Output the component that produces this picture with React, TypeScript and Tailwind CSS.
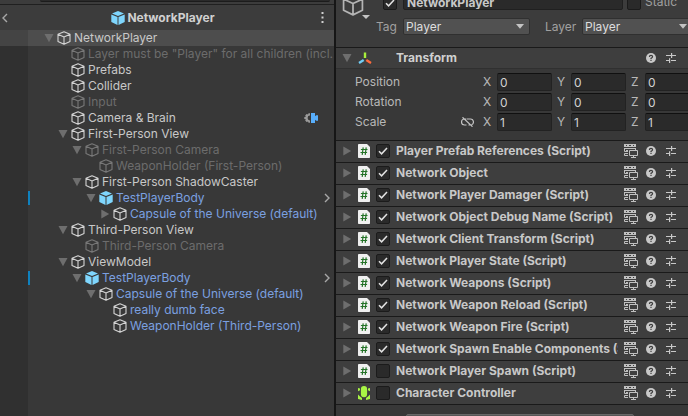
import React from "react";

type NodeKind = "object" | "prefab";
type TreeNode = {
  name: string;
  depth: number;
  kind?: NodeKind;
  tone?: "normal" | "disabled" | "prefab";
  fold?: "open" | "closed";
  override?: boolean;
  enter?: boolean;
  camera?: boolean;
};

const nodes: TreeNode[] = [
  { name: "NetworkPlayer", depth: 0, fold: "open" },
  { name: 'Layer must be "Player" for all children (incl.', depth: 1, tone: "disabled" },
  { name: "Prefabs", depth: 1 },
  { name: "Collider", depth: 1 },
  { name: "Input", depth: 1, tone: "disabled" },
  { name: "Camera & Brain", depth: 1, camera: true },
  { name: "First-Person View", depth: 1, fold: "open" },
  { name: "First-Person Camera", depth: 2, tone: "disabled", fold: "open" },
  { name: "WeaponHolder (First-Person)", depth: 3, tone: "disabled" },
  { name: "First-Person ShadowCaster", depth: 2, fold: "open" },
  { name: "TestPlayerBody", depth: 3, kind: "prefab", tone: "prefab", fold: "open", override: true, enter: true },
  { name: "Capsule of the Universe (default)", depth: 4, tone: "prefab", fold: "closed" },
  { name: "Third-Person View", depth: 1, fold: "open" },
  { name: "Third-Person Camera", depth: 2, tone: "disabled" },
  { name: "ViewModel", depth: 1, fold: "open" },
  { name: "TestPlayerBody", depth: 2, kind: "prefab", tone: "prefab", fold: "open", override: true, enter: true },
  { name: "Capsule of the Universe (default)", depth: 3, tone: "prefab", fold: "open" },
  { name: "really dumb face", depth: 4, tone: "prefab" },
  { name: "WeaponHolder (Third-Person)", depth: 4, tone: "prefab" },
];

const components = [
  { name: "Player Prefab References (Script)", on: true },
  { name: "Network Object", on: true },
  { name: "Network Player Damager (Script)", on: true },
  { name: "Network Object Debug Name (Script)", on: true },
  { name: "Network Client Transform (Script)", on: true },
  { name: "Network Player State (Script)", on: true },
  { name: "Network Weapons (Script)", on: true },
  { name: "Network Weapon Reload (Script)", on: true },
  { name: "Network Weapon Fire (Script)", on: true },
  { name: "Network Spawn Enable Components (Script)", on: true },
  { name: "Network Player Spawn (Script)", on: false },
  { name: "Character Controller", on: false, capsule: true },
];

const toneClass = {
  normal: "text-[#c8c8c8]",
  disabled: "text-[#6c6c6c]",
  prefab: "text-[#7ba0e0]",
};

function Cube({ className }: { className: string }) {
  return (
    <svg viewBox="0 0 14 14" className={`shrink-0 ${className}`} fill="none" stroke="currentColor" strokeWidth="1.1" strokeLinejoin="round" aria-hidden="true">
      <path d="M7 .8 13 3.3V10.4L7 13.3 1 10.4V3.3ZM1 3.3 7 6 13 3.3M7 6V13.3" />
    </svg>
  );
}

function PrefabCube() {
  return (
    <svg viewBox="0 0 14 14" className="size-3.5 shrink-0" fill="#7fd6fd" aria-hidden="true">
      <path d="M7 .1 13 2.6 7 5.1 1 2.6ZM.3 3.5 6.5 6.1V13.9L.3 11ZM13.7 3.5 7.5 6.1V13.9L13.7 11Z" />
    </svg>
  );
}

function Fold({ open }: { open: boolean }) {
  return (
    <svg viewBox="0 0 10 10" className="size-2.5 shrink-0" fill="#6e6e6e" aria-hidden="true">
      <path d={open ? "M.5 1H9.5L5 9.2Z" : "M1.3.6 9.2 5 1.3 9.4Z"} />
    </svg>
  );
}

function CameraBrain() {
  return (
    <svg viewBox="0 0 14 12" className="h-3 w-3.5 shrink-0" aria-hidden="true">
      <path d="M6 1.3V3.6A2.4 2.4 0 0 0 6 8.4V10.7H4.5L4.1 9.4 2.6 10 1.2 8.5 1.8 7.2.2 6.8V5.2L1.8 4.8 1.2 3.4 2.6 2 4.1 2.6 4.5 1.3Z" fill="#9b9b9b" />
      <path d="M7 1H11V4.2L12.2 3.2H14V8.8H12.2L11 7.8V11H7Z" fill="#58aefb" />
    </svg>
  );
}

function Chevron({ left }: { left?: boolean }) {
  return (
    <svg viewBox="0 0 6 10" className="h-2.5 w-1.5" fill="none" stroke="#a8a8a8" strokeWidth="1.4" aria-hidden="true">
      <path d={left ? "M5 1 1 5 5 9" : "M1 1 5 5 1 9"} />
    </svg>
  );
}

function ScriptIcon() {
  return (
    <svg viewBox="0 0 12 14" className="h-3.5 w-3 shrink-0" aria-hidden="true">
      <path d="M.8 0H9L12 3V13.2Q12 14 11.2 14H.8Q0 14 0 13.2V.8Q0 0 .8 0Z" fill="#f0f0f0" />
      <path d="M5.2 3.4 4.2 10.8M8.2 3.4 7.2 10.8M2.9 5.5H9.5M2.5 8.5H9.1" stroke="#237327" strokeWidth="1.2" fill="none" />
    </svg>
  );
}

function CapsuleIcon() {
  return (
    <svg viewBox="0 0 12 14" className="h-3.5 w-3 shrink-0" fill="#a8f545" aria-hidden="true">
      <path d="M6 0A3.1 3.3 0 0 1 9.1 3.3V8A3.1 3.3 0 0 1 2.9 8V3.3A3.1 3.3 0 0 1 6 0ZM0 2 2 2.5V4.3L0 5.3ZM12 2 10 2.5V4.3L12 5.3ZM0 8.5 2 10.5 4 12V14L0 13ZM12 8.5 10 10.5 8 12V14L12 13Z" />
    </svg>
  );
}

function NetIcon() {
  return (
    <svg viewBox="0 0 14 14" className="size-3.5 shrink-0" fill="none" stroke="#c0c0c0" aria-hidden="true">
      <path d="M0 1.5H12" strokeWidth="3" />
      <path d="M2 1.5H3M5 1.5H7M9 1.5H10" stroke="#3e3e3e" />
      <path d="M.5 4V7.5H4M0 4.5H12M2 6.5H4M11.5 4V6M4 9.5H.5V11.5H4" />
      <path d="M5.5 6.5H13.5V11.5H5.5ZM9.5 11.5V13.5M7 13.5H12" />
    </svg>
  );
}

function HelpIcon() {
  return (
    <svg viewBox="0 0 10 10" className="size-2.5 shrink-0" aria-hidden="true">
      <circle cx="5" cy="5" r="5" fill="#c8c8c8" />
      <path d="M3.4 3.9Q3.4 2.4 5 2.4T6.6 3.8Q6.6 4.6 5 5.4V6.2" fill="none" stroke="#3c3c3c" strokeWidth="1.2" />
      <path d="M4.4 6.9H5.6V8.1H4.4Z" fill="#3c3c3c" />
    </svg>
  );
}

function PresetIcon() {
  return (
    <svg viewBox="0 0 10 10" className="size-2.5 shrink-0" fill="none" stroke="#c8c8c8" strokeWidth="1.2" aria-hidden="true">
      <path d="M0 2.5H5M5.6 0V5M5.6 2.5H10M0 7.5H3M3.6 5.3V10M5 7.5H10" />
    </svg>
  );
}

function HeaderTools({ net }: { net?: boolean }) {
  return (
    <div className="flex shrink-0 items-center pr-3">
      {net && <button aria-label="Network state" className="mr-2"><NetIcon /></button>}
      <button aria-label="Help" className="mr-2.5"><HelpIcon /></button>
      <button aria-label="Presets"><PresetIcon /></button>
    </div>
  );
}

function Check({ label, on }: { label: string; on: boolean }) {
  return (
    <span className="relative flex size-3.5 shrink-0">
      <input type="checkbox" aria-label={label} defaultChecked={on} className="peer size-3.5 appearance-none rounded-xs border border-[#1b1b1b] bg-[#2a2a2a]" />
      <svg viewBox="0 0 14 14" className="pointer-events-none absolute inset-0 hidden size-3.5 peer-checked:block" fill="none" stroke="#e2e2e2" strokeWidth="1.5" aria-hidden="true">
        <path d="M3 7.2 5.6 9.8 11 4" />
      </svg>
    </span>
  );
}

function Dropdown({ id, label, className }: { id: string; label: string; className: string }) {
  return (
    <>
      <label htmlFor={id} className="shrink-0 text-[#a0a0a0]">{label}</label>
      <span className={`relative shrink-0 ${className}`}>
        <select id={id} className="block h-[17px] w-full appearance-none rounded-xs border border-[#303030] bg-[#515151] px-0.5 leading-[15px] text-[#dedede]">
          <option>Player</option>
        </select>
        <svg viewBox="0 0 8 5" className="pointer-events-none absolute top-1.5 right-1.5 h-[5px] w-2" fill="#c4c4c4" aria-hidden="true">
          <path d="M0 0H8L4 4.8Z" />
        </svg>
      </span>
    </>
  );
}

function VectorRow({ label, value, link }: { label: string; value: string; link?: boolean }) {
  return (
    <div role="group" aria-label={label} className="flex h-[18px] items-center pl-[19px]">
      <span className="w-[106px] shrink-0">{label}</span>
      <span className="w-[22px] shrink-0">
        {link && (
          <button aria-label="Constrain proportions" className="block">
            <svg viewBox="0 0 13 10" className="h-2.5 w-[13px]" fill="none" stroke="#c4c4c4" strokeWidth="1.2" aria-hidden="true">
              <path d="M5 2H3.5A3 3 0 0 0 3.5 8H5.5M5.5 2H9.5A3 3 0 0 1 10.5 7.8M7.5 8H9M1.5 .3 11.5 9.7" />
            </svg>
          </button>
        )}
      </span>
      {["X", "Y", "Z"].map((axis) => (
        <label key={axis} className="mr-[5px] flex shrink-0 items-center">
          <span className="w-3.5">{axis}</span>
          <input aria-label={`${label} ${axis}`} defaultValue={value} className="h-[18px] w-[55px] rounded-xs border border-[#222] border-t-[#101010] bg-[#2a2a2a] px-0.5 text-[#d2d2d2]" />
        </label>
      ))}
    </div>
  );
}

function Hierarchy() {
  return (
    <section aria-label="Hierarchy" className="flex min-w-0 flex-[334] flex-col overflow-hidden bg-[#383838]">
      <div className="flex h-[5px] shrink-0 border-b border-[#202020] bg-[#3c3c3c] pr-1 pl-10">
        <div className="h-0.5 flex-1 rounded-b-sm border-b border-[#1c1c1c] bg-[#2a2a2a]" />
      </div>
      <header className="flex h-[25px] shrink-0 items-center bg-[#3c3c3c] pr-2">
        <button aria-label="Back" className="pl-0.5"><Chevron left /></button>
        <h1 className="flex flex-1 items-center justify-center gap-0.5 font-bold text-[#d0d0d0]">
          <PrefabCube />NetworkPlayer
        </h1>
        <button aria-label="More" className="flex w-2 justify-center">
          <svg viewBox="0 0 3 11" className="h-[11px] w-[3px]" fill="#d0d0d0" aria-hidden="true">
            <path d="M.5 0H2.5V2H.5ZM.5 4.5H2.5V6.5H.5ZM.5 9H2.5V11H.5Z" />
          </svg>
        </button>
      </header>
      <ul className="flex-1">
        {nodes.map((n, i) => (
          <li key={i} className={`flex h-4 items-center ${i === 0 ? "bg-[#4d4d4d]" : ""}`}>
            <span className={`flex h-4 w-7 shrink-0 items-center ${i === 0 ? "bg-[#444]" : "bg-[#303030]"}`} />
            <span className={`h-3.5 w-0.5 shrink-0 ${n.override ? "bg-[#0f81be]" : ""}`} />
            <span className="shrink-0" style={{ width: 14 + n.depth * 14 }} />
            <span className="flex w-[13px] shrink-0">{n.fold && <Fold open={n.fold === "open"} />}</span>
            {n.kind === "prefab" ? <PrefabCube /> : <Cube className={`size-3.5 ${n.tone === "disabled" ? "text-[#787878]" : "text-[#d4d4d4]"}`} />}
            <span className={`ml-[3px] flex-1 whitespace-nowrap ${toneClass[n.tone ?? "normal"]}`}>{n.name}</span>
            {n.camera && <span className="pr-4"><CameraBrain /></span>}
            {n.enter && <button aria-label={`Open ${n.name}`} className="pr-1"><Chevron /></button>}
          </li>
        ))}
        <li aria-hidden="true" className="h-full w-7 bg-[#303030]" />
      </ul>
    </section>
  );
}

function Inspector() {
  return (
    <section aria-label="Inspector" className="flex min-w-0 flex-[352] flex-col overflow-hidden bg-[#383838] text-[#b8b8b8]">
      <header className="flex h-[47px] shrink-0 overflow-hidden bg-[#3c3c3c] pl-1.5">
        <div className="relative w-[34px] shrink-0">
          <Cube className="-mt-1.5 size-[22px] text-[#b4b4b4]" />
          <svg viewBox="0 0 8 4" className="absolute top-[15px] left-5 h-1 w-2" fill="#c4c4c4" aria-hidden="true"><path d="M0 0H8L4 4Z" /></svg>
        </div>
        <div className="-mt-2 min-w-0 flex-1">
          <div className="flex h-[18px] items-center">
            <span className="ml-[7px] flex pt-1"><Check label="Active" on /></span>
            <input aria-label="Name" defaultValue="NetworkPlayer" className="mr-1 ml-1.5 h-[18px] min-w-0 flex-1 rounded-xs border border-[#202020] bg-[#2a2a2a] px-[3px] pt-0.5 font-bold text-[#c8c8c8]" />
            <span className="flex pt-1"><Check label="Static" on={false} /></span>
            <span className="w-[47px] pt-0.5 pl-1 text-[#a0a0a0]">Static</span>
          </div>
          <div className="mt-2 flex items-center">
            <div className="flex w-[154px] shrink-0 items-center justify-between"><Dropdown id="tag" label="Tag" className="w-[127px]" /></div>
            <div className="ml-[15px] flex w-[148px] shrink-0 items-center justify-between"><Dropdown id="layer" label="Layer" className="w-[111px]" /></div>
          </div>
        </div>
      </header>
      <div className="flex h-[22px] shrink-0 items-center border-t border-b border-t-[#1a1a1a] border-b-[#303030] bg-[#3e3e3e] pl-1.5">
        <span className="w-4"><Fold open /></span>
        <svg viewBox="0 0 14 13" className="h-[13px] w-3.5" fill="none" strokeWidth="2.4" aria-hidden="true">
          <path d="M7 .5V6" stroke="#a8ee3c" />
          <path d="M5.7 8 1 11" stroke="#71cdf5" />
          <path d="M8.3 8 13 11" stroke="#ff6b3d" />
        </svg>
        <h2 className="ml-6 flex-1 font-bold text-[#d0d0d0]">Transform</h2>
        <HeaderTools />
      </div>
      <div className="flex h-[71px] shrink-0 flex-col gap-0.5 pt-1">
        <VectorRow label="Position" value="0" />
        <VectorRow label="Rotation" value="0" />
        <VectorRow label="Scale" value="1" link />
      </div>
      <ul className="shrink-0 border-b border-[#1a1a1a]">
        {components.map((c) => (
          <li key={c.name} className="flex h-[22px] items-center border-t border-[#1a1a1a] bg-[#3e3e3e] pb-px pl-1.5">
            <span className="w-4 shrink-0"><Fold open={false} /></span>
            {c.capsule ? <CapsuleIcon /> : <ScriptIcon />}
            <span className="mr-1.5 ml-1.5 flex"><Check label={c.name} on={c.on} /></span>
            <h2 className="mr-1.5 min-w-0 flex-1 truncate text-clip font-bold text-[#c8c8c8]">{c.name}</h2>
            <HeaderTools net />
          </li>
        ))}
      </ul>
      <div className="flex justify-center pt-[9px] pl-4">
        <button aria-label="Add Component" className="h-5 w-[228px] shrink-0 rounded-xs border border-[#686868] bg-[#585858]" />
      </div>
    </section>
  );
}

export default function App() {
  return (
    <main className="flex h-screen overflow-hidden bg-[#191919] font-['Inter',sans-serif] text-xs leading-4">
      <Hierarchy />
      <div className="w-0.5 shrink-0 bg-[#161616]" />
      <Inspector />
    </main>
  );
}
